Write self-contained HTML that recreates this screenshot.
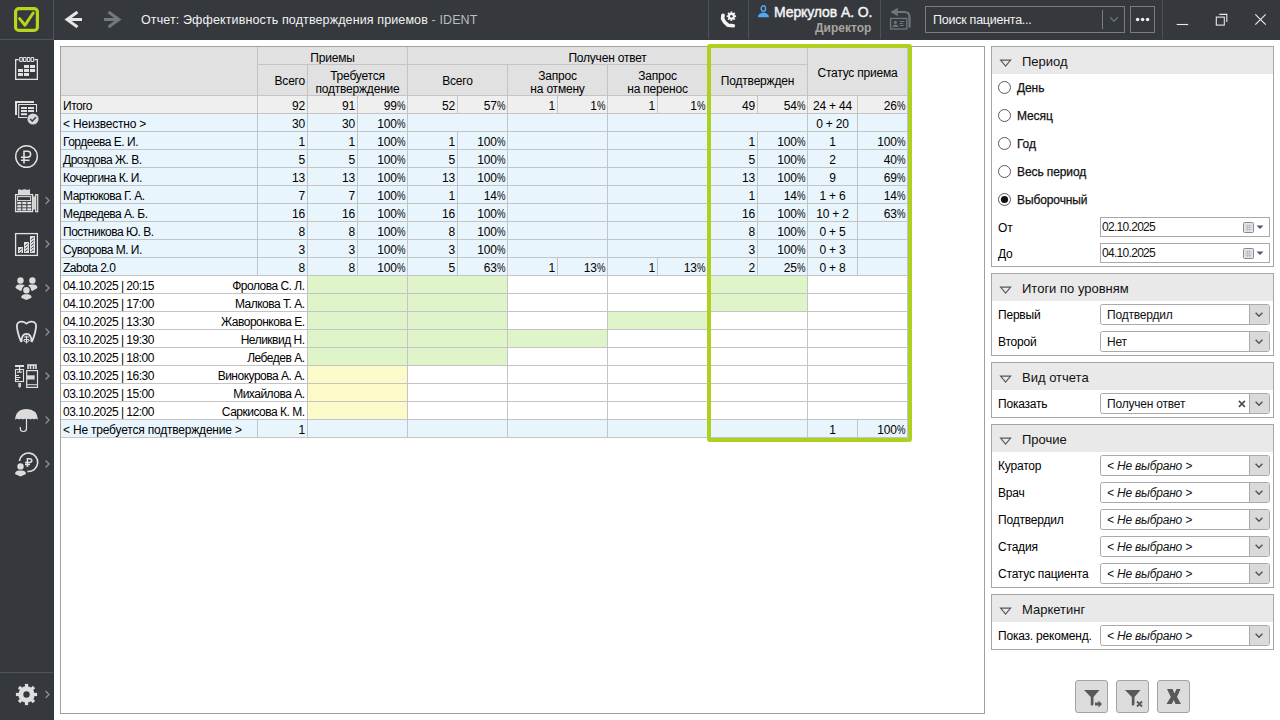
<!DOCTYPE html>
<html><head><meta charset="utf-8"><title>IDENT</title>
<style>
*{box-sizing:border-box;margin:0;padding:0}
html,body{width:1280px;height:720px;overflow:hidden;background:#fff;font-family:"Liberation Sans",sans-serif;color:#000}
.a{position:absolute}
.t{position:absolute;white-space:nowrap;font-size:12px;line-height:18px}
.c{position:absolute;white-space:nowrap;font-size:12px;line-height:17px;overflow:hidden;letter-spacing:-0.2px}
.r{text-align:right;padding-right:2px}
.l{text-align:left;padding-left:2px;letter-spacing:-0.5px}
.m{text-align:center}
</style></head><body>
<div class="a" style="left:0;top:0;width:1280px;height:40px;background:#35383d"></div><div class="a" style="left:0;top:0;width:54px;height:720px;background:#35383d"></div><div class="a" style="left:53px;top:0;width:1px;height:40px;background:#4f535a"></div><div class="a" style="left:0;top:39px;width:54px;height:1px;background:#4f535a"></div><svg class="a" style="left:0;top:0" width="54" height="40" viewBox="0 0 54 40"><rect x="15.6" y="8.6" width="21.8" height="21.8" rx="3.2" fill="none" stroke="#b4d719" stroke-width="3.2"/><path d="M19.6 18.6 L25 25.2 L33.2 13" fill="none" stroke="#b4d719" stroke-width="3" stroke-linecap="round" stroke-linejoin="round"/></svg><svg class="a" style="left:60px;top:5px" width="70" height="30" viewBox="0 0 70 30"><path d="M17.5 7 L7 14.5 L17.5 22 M7.2 14.5 H22" fill="none" stroke="#e6e6e6" stroke-width="2.9" stroke-linejoin="miter"/><path d="M48.5 7 L59 14.5 L48.5 22 M58.8 14.5 H44" fill="none" stroke="#74787f" stroke-width="2.9" stroke-linejoin="miter"/></svg><div class="t" style="left:141px;top:10px;font-size:12.5px;line-height:20px;color:#f2f2f2;letter-spacing:0.12px">Отчет: Эффективность подтверждения приемов <span style="color:#b9bcc0">- IDENT</span></div><div class="a" style="left:708px;top:0;width:1px;height:39px;background:#4d5158"></div><div class="a" style="left:748px;top:0;width:1px;height:39px;background:#4d5158"></div><div class="a" style="left:880px;top:0;width:1px;height:39px;background:#4d5158"></div><div class="a" style="left:1162px;top:0;width:1px;height:39px;background:#4d5158"></div><svg class="a" style="left:712px;top:5px" width="32" height="30" viewBox="0 0 32 30"><path d="M11 10.2 L10.6 13.6 Q12 17.5 16 20.3 L21.3 20.8" fill="none" stroke="#f4f4f4" stroke-width="3.6" stroke-linecap="round" stroke-linejoin="round"/><g transform="translate(19.4 11.2)" fill="#f4f4f4"><circle r="3.4"/><rect x="-0.9" y="-4.7" width="1.8" height="2" transform="rotate(0)"/><rect x="-0.9" y="-4.7" width="1.8" height="2" transform="rotate(45)"/><rect x="-0.9" y="-4.7" width="1.8" height="2" transform="rotate(90)"/><rect x="-0.9" y="-4.7" width="1.8" height="2" transform="rotate(135)"/><rect x="-0.9" y="-4.7" width="1.8" height="2" transform="rotate(180)"/><rect x="-0.9" y="-4.7" width="1.8" height="2" transform="rotate(225)"/><rect x="-0.9" y="-4.7" width="1.8" height="2" transform="rotate(270)"/><rect x="-0.9" y="-4.7" width="1.8" height="2" transform="rotate(315)"/></g><circle cx="19.4" cy="11.2" r="1.3" fill="#35383d"/></svg><svg class="a" style="left:752px;top:2px" width="20" height="18" viewBox="0 0 20 18"><ellipse cx="11.4" cy="6.6" rx="2.2" ry="2.8" fill="none" stroke="#4fabee" stroke-width="1.4"/><path d="M5.8 15.3 Q6.2 11.2 11.4 10.6 Q16.6 11.2 17 15.3 Z" fill="#4fabee"/></svg><div class="t" style="left:774px;top:3px;font-size:14px;line-height:18px;font-weight:normal;-webkit-text-stroke:0.45px #f4f4f4;color:#f4f4f4;letter-spacing:-0.1px">Меркулов А. О.</div><div class="t" style="left:815px;top:20px;font-size:12px;line-height:16px;font-weight:bold;color:#aaa59f;letter-spacing:0px">Директор</div><svg class="a" style="left:884px;top:4px" width="32" height="28" viewBox="0 0 32 28"><path d="M6.5 8 L13.8 3.8 V12.2 Z" fill="#70757d"/><path d="M13 8 H20.5 Q25.5 8 25.5 13 V23.5" fill="none" stroke="#70757d" stroke-width="2.2"/><rect x="6.6" y="14.4" width="16.2" height="10.6" fill="none" stroke="#70757d" stroke-width="1.3"/><circle cx="11.4" cy="18.3" r="1.6" fill="#70757d"/><path d="M8.2 23 Q8.8 20.5 11.4 20.4 Q14 20.5 14.6 23 Z" fill="#70757d"/><path d="M15.8 17.5 H20.2 M15.8 19.5 H19 M15.8 21.5 H19.8" stroke="#70757d" stroke-width="1"/></svg><div class="a" style="left:925px;top:6px;width:200px;height:27px;border:1px solid #7c7c7c"></div><div class="a" style="left:1102px;top:10px;width:1px;height:19px;background:#7c7c7c"></div><svg class="a" style="left:1108px;top:15px" width="12" height="9" viewBox="0 0 12 9"><path d="M2.2 2.2 L6 6.2 L9.8 2.2" fill="none" stroke="#6b7078" stroke-width="1.4"/></svg><div class="t" style="left:933px;top:10px;font-size:12.5px;line-height:20px;color:#f2f2f2;letter-spacing:-0.25px">Поиск пациента...</div><div class="a" style="left:1130px;top:6px;width:25px;height:27px;border:1px solid #7c7c7c"></div><svg class="a" style="left:1130px;top:6px" width="25" height="27" viewBox="0 0 25 27"><circle cx="7.6" cy="13.4" r="1.75" fill="#f0f0f0"/><circle cx="12.6" cy="13.4" r="1.75" fill="#f0f0f0"/><circle cx="17.6" cy="13.4" r="1.75" fill="#f0f0f0"/></svg><svg class="a" style="left:1165px;top:4px" width="115" height="32" viewBox="0 0 115 32"><path d="M11.7 20.5 H23.2" stroke="#e8e8e8" stroke-width="1.1"/><rect x="51.3" y="13.1" width="8" height="8" fill="none" stroke="#e8e8e8" stroke-width="1.1"/><path d="M54.2 10.4 H61.8 V18" fill="none" stroke="#e8e8e8" stroke-width="1.1"/><path d="M90.3 10.3 L100.7 20.7 M100.7 10.3 L90.3 20.7" stroke="#e8e8e8" stroke-width="1.2"/></svg><svg class="a" style="left:0;top:0" width="54" height="720" viewBox="0 0 54 720"><rect x="15.65" y="59.65" width="21.7" height="19.7" fill="none" stroke="#e2e2e2" stroke-width="1.3"/><rect x="18.6" y="56.6" width="15.8" height="5.4" fill="#35383d"/><rect x="19.7" y="57.5" width="2.6" height="4" rx="0.6" fill="none" stroke="#e2e2e2" stroke-width="1.1"/><rect x="23.5" y="57.5" width="2.6" height="4" rx="0.6" fill="none" stroke="#e2e2e2" stroke-width="1.1"/><rect x="27.3" y="57.5" width="2.6" height="4" rx="0.6" fill="none" stroke="#e2e2e2" stroke-width="1.1"/><rect x="31.1" y="57.5" width="2.6" height="4" rx="0.6" fill="none" stroke="#e2e2e2" stroke-width="1.1"/><rect x="24" y="65" width="5" height="3" fill="#e2e2e2"/><rect x="30" y="65" width="5" height="3" fill="#e2e2e2"/><rect x="18" y="69" width="5" height="3" fill="#e2e2e2"/><rect x="24" y="69" width="5" height="3" fill="#e2e2e2"/><rect x="30" y="69" width="5" height="3" fill="#e2e2e2"/><rect x="18" y="73" width="5" height="3" fill="#e2e2e2"/><rect x="24" y="73" width="5" height="3" fill="#e2e2e2"/><path d="M16 115 V102 H34" fill="none" stroke="#e2e2e2" stroke-width="2"/><path d="M27 117.5 H18.7 V104.5 H36.5 V112" fill="none" stroke="#e2e2e2" stroke-width="1.1"/><rect x="21" y="107" width="6" height="2" fill="#e2e2e2"/><rect x="28" y="107" width="6" height="2" fill="#e2e2e2"/><rect x="21" y="110" width="6" height="2" fill="#e2e2e2"/><rect x="28" y="110" width="6" height="2" fill="#e2e2e2"/><rect x="21" y="113.2" width="6" height="2" fill="#e2e2e2"/><circle cx="33" cy="119" r="5.6" fill="#d6d6d6"/><path d="M30.2 119 L32.3 121.1 L35.9 117.3" fill="none" stroke="#35383d" stroke-width="1.4"/><circle cx="26.5" cy="156.5" r="10.8" fill="none" stroke="#e2e2e2" stroke-width="1.4"/><path d="M24 163.5 V151.2 H27.6 Q30.6 151.2 30.6 154.2 Q30.6 157.2 27.6 157.2 H21 M21 160.2 H29.5" fill="none" stroke="#e2e2e2" stroke-width="1.6"/><path d="M18 194 V190 Q19 188.8 20 189.6 Q21.5 190.5 23 189.6 Q24.5 188.8 26 189.6 Q27.5 190.5 29 189.6 Q30 188.8 30 190 V194 Z" fill="#d8d8d8"/><rect x="15.6" y="194.6" width="17" height="17" fill="none" stroke="#e2e2e2" stroke-width="1.3"/><rect x="17.6" y="196.6" width="13" height="4" fill="none" stroke="#e2e2e2" stroke-width="1"/><rect x="17.3" y="202" width="4" height="2.2" fill="#e2e2e2"/><rect x="22.3" y="202" width="4" height="2.2" fill="#e2e2e2"/><rect x="27.3" y="202" width="4" height="2.2" fill="#e2e2e2"/><rect x="17.3" y="205.2" width="4" height="2.2" fill="#e2e2e2"/><rect x="22.3" y="205.2" width="4" height="2.2" fill="#e2e2e2"/><rect x="27.3" y="205.2" width="4" height="2.2" fill="#e2e2e2"/><rect x="17.3" y="208.3" width="4" height="2.2" fill="#e2e2e2"/><rect x="22.3" y="208.3" width="4" height="2.2" fill="#e2e2e2"/><rect x="27.3" y="208.3" width="4" height="2.2" fill="#e2e2e2"/><rect x="32.6" y="196.5" width="3" height="13" fill="#d0d0d0"/><rect x="35.7" y="194.7" width="2" height="17" fill="none" stroke="#e2e2e2" stroke-width="1.2"/><rect x="15.6" y="233.6" width="21.8" height="21.8" fill="none" stroke="#e2e2e2" stroke-width="1.3"/><rect x="18" y="247" width="5" height="6" fill="#e2e2e2"/><path d="M19 250.7 L22 248.5" stroke="#35383d" stroke-width="0.9"/><path d="M19 253.7 L22 251.5" stroke="#35383d" stroke-width="0.9"/><rect x="24" y="242" width="5" height="11" fill="#e2e2e2"/><path d="M25 245.7 L28 243.5" stroke="#35383d" stroke-width="0.9"/><path d="M25 248.7 L28 246.5" stroke="#35383d" stroke-width="0.9"/><path d="M25 251.7 L28 249.5" stroke="#35383d" stroke-width="0.9"/><rect x="30" y="236" width="5" height="17" fill="#e2e2e2"/><path d="M31 239.7 L34 237.5" stroke="#35383d" stroke-width="0.9"/><path d="M31 242.7 L34 240.5" stroke="#35383d" stroke-width="0.9"/><path d="M31 245.7 L34 243.5" stroke="#35383d" stroke-width="0.9"/><path d="M31 248.7 L34 246.5" stroke="#35383d" stroke-width="0.9"/><path d="M31 251.7 L34 249.5" stroke="#35383d" stroke-width="0.9"/><circle cx="20.5" cy="280.5" r="3.2" fill="#dcdcdc"/><path d="M15.5 288 Q15.5 285 18.5 284.5 H22.5 Q25.5 285 25.5 288 L20.5 291 Z" fill="#dcdcdc"/><circle cx="32.4" cy="280.5" r="3.2" fill="#dcdcdc"/><path d="M27.4 288 Q27.4 285 30.4 284.5 H34.4 Q37.4 285 37.4 288 L32.4 291 Z" fill="#dcdcdc"/><circle cx="26.4" cy="290" r="4.6" fill="#35383d"/><path d="M19.5 299 Q19.5 293.5 26.4 293.2 Q33.3 293.5 33.3 299 L26.4 302 Z" fill="#35383d"/><circle cx="26.4" cy="290.2" r="3.2" fill="#dcdcdc"/><path d="M21.2 297.8 Q21.2 294.8 24.4 294.3 H28.4 Q31.599999999999998 294.8 31.599999999999998 297.8 L26.4 300 Z" fill="#dcdcdc"/><path d="M21.5 342 Q19.5 339 17.6 331 Q16.3 325 17.5 323.5 Q19 321.5 22 321.7 Q24.5 322 26.5 323.6 Q28.5 322 31 321.7 Q34 321.5 35.5 323.5 Q36.7 325 35.4 331 Q33.5 339 31.5 342" fill="none" stroke="#e2e2e2" stroke-width="1.8"/><path d="M21.5 342 Q21.5 333.8 26.5 333.8 Q31.5 333.8 31.5 342" fill="none" stroke="#e2e2e2" stroke-width="1.8"/><path d="M23.5 340 Q26.5 344.5 29.5 340 M24 337 H29 M24 339.5 H29 M26.5 335.5 V343.5" fill="none" stroke="#e2e2e2" stroke-width="1.1"/><rect x="15" y="365" width="9" height="2" fill="#e2e2e2"/><rect x="19" y="367" width="1.2" height="5" fill="#e2e2e2"/><rect x="17" y="371.5" width="5" height="1.2" fill="#e2e2e2"/><rect x="15.5" y="369.5" width="8" height="12" fill="none" stroke="#e2e2e2" stroke-width="1.1"/><rect x="16" y="375" width="3" height="1" fill="#e2e2e2"/><rect x="16" y="377" width="4.5" height="1" fill="#e2e2e2"/><rect x="16" y="379" width="3" height="1" fill="#e2e2e2"/><path d="M18.3 383 H21 V386.5 L19.65 388 L18.3 386.5 Z" fill="#cfcfcf"/><path d="M28 369 V365 H36 V369 M30.5 365.5 V369 M33.5 365.5 V369" fill="none" stroke="#e2e2e2" stroke-width="1.6"/><rect x="26.7" y="370.6" width="10.8" height="16.8" fill="none" stroke="#e2e2e2" stroke-width="1.2"/><rect x="27" y="375.3" width="7.7" height="4.2" fill="#d8d8d8"/><rect x="26.7" y="384.2" width="10.8" height="1" fill="#e2e2e2"/><path d="M15 419.8 Q15.8 409 26.5 409 Q37.2 409 38 419.8 Q36 418 34 419.5 Q32.3 418 30.3 419.5 Q28.4 418 26.5 419.2 Q24.6 418 22.7 419.5 Q20.7 418 19 419.5 Q17 418 15 419.8 Z" fill="#dcdcdc"/><path d="M26.5 419 V428.5 Q26.5 431.5 23.5 431.5 Q20.3 431.5 20.3 428.5 V427" fill="none" stroke="#e2e2e2" stroke-width="1.2"/><path d="M19.4 461 A9.2 9.2 0 1 1 27.4 471.4" fill="none" stroke="#e2e2e2" stroke-width="1.6"/><path d="M27.4 467 V458.7 H29.6 Q31.8 458.7 31.8 460.6 Q31.8 462.5 29.6 462.5 H25 M25 464.6 H30" fill="none" stroke="#e2e2e2" stroke-width="1.5"/><circle cx="20.5" cy="466.2" r="4.6" fill="#35383d"/><circle cx="20.5" cy="466.4" r="3.2" fill="#dcdcdc"/><path d="M15.0 474 Q15.0 471 18.5 470.5 H22.5 Q26.0 471 26.0 474 L20.5 476.5 Z" fill="#dcdcdc"/><path d="M45.6 197.1 L49 200.5 L45.6 203.9" fill="none" stroke="#8c8c8c" stroke-width="1.4"/><path d="M45.6 240.6 L49 244 L45.6 247.4" fill="none" stroke="#8c8c8c" stroke-width="1.4"/><path d="M45.6 284.6 L49 288 L45.6 291.4" fill="none" stroke="#8c8c8c" stroke-width="1.4"/><path d="M45.6 328.6 L49 332 L45.6 335.4" fill="none" stroke="#8c8c8c" stroke-width="1.4"/><path d="M45.6 372.6 L49 376 L45.6 379.4" fill="none" stroke="#8c8c8c" stroke-width="1.4"/><path d="M45.6 416.6 L49 420 L45.6 423.4" fill="none" stroke="#8c8c8c" stroke-width="1.4"/><path d="M45.6 460.6 L49 464 L45.6 467.4" fill="none" stroke="#8c8c8c" stroke-width="1.4"/><path d="M45.6 691.1 L49 694.5 L45.6 697.9" fill="none" stroke="#8c8c8c" stroke-width="1.4"/><rect x="0" y="672" width="53" height="1" fill="#50545b"/><g transform="translate(26.5 694.5)"><circle r="8.2" fill="#dedede"/><rect x="-1.6" y="-10.6" width="3.2" height="3.5" transform="rotate(0)" fill="#dedede"/><rect x="-1.6" y="-10.6" width="3.2" height="3.5" transform="rotate(45)" fill="#dedede"/><rect x="-1.6" y="-10.6" width="3.2" height="3.5" transform="rotate(90)" fill="#dedede"/><rect x="-1.6" y="-10.6" width="3.2" height="3.5" transform="rotate(135)" fill="#dedede"/><rect x="-1.6" y="-10.6" width="3.2" height="3.5" transform="rotate(180)" fill="#dedede"/><rect x="-1.6" y="-10.6" width="3.2" height="3.5" transform="rotate(225)" fill="#dedede"/><rect x="-1.6" y="-10.6" width="3.2" height="3.5" transform="rotate(270)" fill="#dedede"/><rect x="-1.6" y="-10.6" width="3.2" height="3.5" transform="rotate(315)" fill="#dedede"/><circle r="3.2" fill="#35383d"/></g></svg><div class="a" style="left:60px;top:46px;width:925px;height:668px;border:1px solid #a0a0a0;background:#fff"></div><div class="a" style="left:61px;top:47px;width:197px;height:49px;background:#e1e1e1;border-right:1px solid #c4c4c4;border-bottom:1px solid #c4c4c4"></div><div class="a" style="left:258px;top:47px;width:150px;height:18px;background:#e1e1e1;border-right:1px solid #c4c4c4;border-bottom:1px solid #c4c4c4"></div><div class="c m" style="left:258px;top:47px;width:149px;height:17px;padding-top:2px;padding-top:3px">Приемы</div><div class="a" style="left:408px;top:47px;width:400px;height:18px;background:#e1e1e1;border-right:1px solid #c4c4c4;border-bottom:1px solid #c4c4c4"></div><div class="c m" style="left:408px;top:47px;width:399px;height:17px;padding-top:2px;padding-top:3px">Получен ответ</div><div class="a" style="left:808px;top:47px;width:100px;height:49px;background:#e1e1e1;border-right:1px solid #c4c4c4;border-bottom:1px solid #c4c4c4"></div><div class="a" style="left:258px;top:65px;width:50px;height:31px;background:#e1e1e1;border-right:1px solid #c4c4c4;border-bottom:1px solid #c4c4c4"></div><div class="a" style="left:308px;top:65px;width:100px;height:31px;background:#e1e1e1;border-right:1px solid #c4c4c4;border-bottom:1px solid #c4c4c4"></div><div class="a" style="left:408px;top:65px;width:100px;height:31px;background:#e1e1e1;border-right:1px solid #c4c4c4;border-bottom:1px solid #c4c4c4"></div><div class="a" style="left:508px;top:65px;width:100px;height:31px;background:#e1e1e1;border-right:1px solid #c4c4c4;border-bottom:1px solid #c4c4c4"></div><div class="a" style="left:608px;top:65px;width:100px;height:31px;background:#e1e1e1;border-right:1px solid #c4c4c4;border-bottom:1px solid #c4c4c4"></div><div class="a" style="left:708px;top:65px;width:100px;height:31px;background:#e1e1e1;border-right:1px solid #c4c4c4;border-bottom:1px solid #c4c4c4"></div><div class="a r" style="left:258px;top:75.0px;width:49px;font-size:12px;line-height:13px;white-space:nowrap;letter-spacing:-0.2px">Всего</div><div class="a m" style="left:308px;top:69.5px;width:99px;font-size:12px;line-height:13px;white-space:nowrap;letter-spacing:-0.2px">Требуется<br>подтверждение</div><div class="a m" style="left:408px;top:75.0px;width:99px;font-size:12px;line-height:13px;white-space:nowrap;letter-spacing:-0.2px">Всего</div><div class="a m" style="left:508px;top:69.5px;width:99px;font-size:12px;line-height:13px;white-space:nowrap;letter-spacing:-0.2px">Запрос<br>на отмену</div><div class="a m" style="left:608px;top:69.5px;width:99px;font-size:12px;line-height:13px;white-space:nowrap;letter-spacing:-0.2px">Запрос<br>на перенос</div><div class="a m" style="left:708px;top:75.0px;width:99px;font-size:12px;line-height:13px;white-space:nowrap;letter-spacing:-0.2px">Подтвержден</div><div class="a m" style="left:808px;top:66.5px;width:99px;font-size:12px;line-height:13px;white-space:nowrap;letter-spacing:-0.2px">Статус приема</div><div class="a" style="left:61px;top:96px;width:197px;height:18px;background:#efefef;border-right:1px solid #c4c4c4;border-bottom:1px solid #c4c4c4"></div><div class="c l" style="left:61px;top:96px;width:196px;height:17px;padding-top:2px;">Итого</div><div class="a" style="left:258px;top:96px;width:50px;height:18px;background:#efefef;border-right:1px solid #c4c4c4;border-bottom:1px solid #c4c4c4"></div><div class="c r" style="left:258px;top:96px;width:49px;height:17px;padding-top:2px;">92</div><div class="a" style="left:308px;top:96px;width:50px;height:18px;background:#efefef;border-right:1px solid #c4c4c4;border-bottom:1px solid #c4c4c4"></div><div class="c r" style="left:308px;top:96px;width:49px;height:17px;padding-top:2px;">91</div><div class="a" style="left:358px;top:96px;width:50px;height:18px;background:#efefef;border-right:1px solid #c4c4c4;border-bottom:1px solid #c4c4c4"></div><div class="c r" style="left:358px;top:96px;width:49px;height:17px;padding-top:2px;">99<span style="display:inline-block;transform:scaleX(0.8);transform-origin:100% 50%;margin-left:-2.1px">%</span></div><div class="a" style="left:408px;top:96px;width:50px;height:18px;background:#efefef;border-right:1px solid #c4c4c4;border-bottom:1px solid #c4c4c4"></div><div class="c r" style="left:408px;top:96px;width:49px;height:17px;padding-top:2px;">52</div><div class="a" style="left:458px;top:96px;width:50px;height:18px;background:#efefef;border-right:1px solid #c4c4c4;border-bottom:1px solid #c4c4c4"></div><div class="c r" style="left:458px;top:96px;width:49px;height:17px;padding-top:2px;">57<span style="display:inline-block;transform:scaleX(0.8);transform-origin:100% 50%;margin-left:-2.1px">%</span></div><div class="a" style="left:508px;top:96px;width:50px;height:18px;background:#efefef;border-right:1px solid #c4c4c4;border-bottom:1px solid #c4c4c4"></div><div class="c r" style="left:508px;top:96px;width:49px;height:17px;padding-top:2px;">1</div><div class="a" style="left:558px;top:96px;width:50px;height:18px;background:#efefef;border-right:1px solid #c4c4c4;border-bottom:1px solid #c4c4c4"></div><div class="c r" style="left:558px;top:96px;width:49px;height:17px;padding-top:2px;">1<span style="display:inline-block;transform:scaleX(0.8);transform-origin:100% 50%;margin-left:-2.1px">%</span></div><div class="a" style="left:608px;top:96px;width:50px;height:18px;background:#efefef;border-right:1px solid #c4c4c4;border-bottom:1px solid #c4c4c4"></div><div class="c r" style="left:608px;top:96px;width:49px;height:17px;padding-top:2px;">1</div><div class="a" style="left:658px;top:96px;width:50px;height:18px;background:#efefef;border-right:1px solid #c4c4c4;border-bottom:1px solid #c4c4c4"></div><div class="c r" style="left:658px;top:96px;width:49px;height:17px;padding-top:2px;">1<span style="display:inline-block;transform:scaleX(0.8);transform-origin:100% 50%;margin-left:-2.1px">%</span></div><div class="a" style="left:708px;top:96px;width:50px;height:18px;background:#efefef;border-right:1px solid #c4c4c4;border-bottom:1px solid #c4c4c4"></div><div class="c r" style="left:708px;top:96px;width:49px;height:17px;padding-top:2px;">49</div><div class="a" style="left:758px;top:96px;width:50px;height:18px;background:#efefef;border-right:1px solid #c4c4c4;border-bottom:1px solid #c4c4c4"></div><div class="c r" style="left:758px;top:96px;width:49px;height:17px;padding-top:2px;">54<span style="display:inline-block;transform:scaleX(0.8);transform-origin:100% 50%;margin-left:-2.1px">%</span></div><div class="a" style="left:808px;top:96px;width:50px;height:18px;background:#efefef;border-right:1px solid #c4c4c4;border-bottom:1px solid #c4c4c4"></div><div class="c m" style="left:808px;top:96px;width:49px;height:17px;padding-top:2px;">24 + 44</div><div class="a" style="left:858px;top:96px;width:50px;height:18px;background:#efefef;border-right:1px solid #c4c4c4;border-bottom:1px solid #c4c4c4"></div><div class="c r" style="left:858px;top:96px;width:49px;height:17px;padding-top:2px;">26<span style="display:inline-block;transform:scaleX(0.8);transform-origin:100% 50%;margin-left:-2.1px">%</span></div><div class="a" style="left:61px;top:114px;width:197px;height:18px;background:#e8f5fd;border-right:1px solid #c4c4c4;border-bottom:1px solid #c4c4c4"></div><div class="c l" style="left:61px;top:114px;width:196px;height:17px;padding-top:2px;letter-spacing:-0.2px">&lt; Неизвестно &gt;</div><div class="a" style="left:258px;top:114px;width:50px;height:18px;background:#e8f5fd;border-right:1px solid #c4c4c4;border-bottom:1px solid #c4c4c4"></div><div class="c r" style="left:258px;top:114px;width:49px;height:17px;padding-top:2px;">30</div><div class="a" style="left:308px;top:114px;width:50px;height:18px;background:#e8f5fd;border-right:1px solid #c4c4c4;border-bottom:1px solid #c4c4c4"></div><div class="c r" style="left:308px;top:114px;width:49px;height:17px;padding-top:2px;">30</div><div class="a" style="left:358px;top:114px;width:50px;height:18px;background:#e8f5fd;border-right:1px solid #c4c4c4;border-bottom:1px solid #c4c4c4"></div><div class="c r" style="left:358px;top:114px;width:49px;height:17px;padding-top:2px;">100<span style="display:inline-block;transform:scaleX(0.8);transform-origin:100% 50%;margin-left:-2.1px">%</span></div><div class="a" style="left:408px;top:114px;width:100px;height:18px;background:#e8f5fd;border-right:1px solid #c4c4c4;border-bottom:1px solid #c4c4c4"></div><div class="a" style="left:508px;top:114px;width:100px;height:18px;background:#e8f5fd;border-right:1px solid #c4c4c4;border-bottom:1px solid #c4c4c4"></div><div class="a" style="left:608px;top:114px;width:100px;height:18px;background:#e8f5fd;border-right:1px solid #c4c4c4;border-bottom:1px solid #c4c4c4"></div><div class="a" style="left:708px;top:114px;width:100px;height:18px;background:#e8f5fd;border-right:1px solid #c4c4c4;border-bottom:1px solid #c4c4c4"></div><div class="a" style="left:808px;top:114px;width:50px;height:18px;background:#e8f5fd;border-right:1px solid #c4c4c4;border-bottom:1px solid #c4c4c4"></div><div class="c m" style="left:808px;top:114px;width:49px;height:17px;padding-top:2px;">0 + 20</div><div class="a" style="left:858px;top:114px;width:50px;height:18px;background:#e8f5fd;border-right:1px solid #c4c4c4;border-bottom:1px solid #c4c4c4"></div><div class="a" style="left:61px;top:132px;width:197px;height:18px;background:#e8f5fd;border-right:1px solid #c4c4c4;border-bottom:1px solid #c4c4c4"></div><div class="c l" style="left:61px;top:132px;width:196px;height:17px;padding-top:2px;">Гордеева Е. И.</div><div class="a" style="left:258px;top:132px;width:50px;height:18px;background:#e8f5fd;border-right:1px solid #c4c4c4;border-bottom:1px solid #c4c4c4"></div><div class="c r" style="left:258px;top:132px;width:49px;height:17px;padding-top:2px;">1</div><div class="a" style="left:308px;top:132px;width:50px;height:18px;background:#e8f5fd;border-right:1px solid #c4c4c4;border-bottom:1px solid #c4c4c4"></div><div class="c r" style="left:308px;top:132px;width:49px;height:17px;padding-top:2px;">1</div><div class="a" style="left:358px;top:132px;width:50px;height:18px;background:#e8f5fd;border-right:1px solid #c4c4c4;border-bottom:1px solid #c4c4c4"></div><div class="c r" style="left:358px;top:132px;width:49px;height:17px;padding-top:2px;">100<span style="display:inline-block;transform:scaleX(0.8);transform-origin:100% 50%;margin-left:-2.1px">%</span></div><div class="a" style="left:408px;top:132px;width:50px;height:18px;background:#e8f5fd;border-right:1px solid #c4c4c4;border-bottom:1px solid #c4c4c4"></div><div class="c r" style="left:408px;top:132px;width:49px;height:17px;padding-top:2px;">1</div><div class="a" style="left:458px;top:132px;width:50px;height:18px;background:#e8f5fd;border-right:1px solid #c4c4c4;border-bottom:1px solid #c4c4c4"></div><div class="c r" style="left:458px;top:132px;width:49px;height:17px;padding-top:2px;">100<span style="display:inline-block;transform:scaleX(0.8);transform-origin:100% 50%;margin-left:-2.1px">%</span></div><div class="a" style="left:508px;top:132px;width:100px;height:18px;background:#e8f5fd;border-right:1px solid #c4c4c4;border-bottom:1px solid #c4c4c4"></div><div class="a" style="left:608px;top:132px;width:100px;height:18px;background:#e8f5fd;border-right:1px solid #c4c4c4;border-bottom:1px solid #c4c4c4"></div><div class="a" style="left:708px;top:132px;width:50px;height:18px;background:#e8f5fd;border-right:1px solid #c4c4c4;border-bottom:1px solid #c4c4c4"></div><div class="c r" style="left:708px;top:132px;width:49px;height:17px;padding-top:2px;">1</div><div class="a" style="left:758px;top:132px;width:50px;height:18px;background:#e8f5fd;border-right:1px solid #c4c4c4;border-bottom:1px solid #c4c4c4"></div><div class="c r" style="left:758px;top:132px;width:49px;height:17px;padding-top:2px;">100<span style="display:inline-block;transform:scaleX(0.8);transform-origin:100% 50%;margin-left:-2.1px">%</span></div><div class="a" style="left:808px;top:132px;width:50px;height:18px;background:#e8f5fd;border-right:1px solid #c4c4c4;border-bottom:1px solid #c4c4c4"></div><div class="c m" style="left:808px;top:132px;width:49px;height:17px;padding-top:2px;">1</div><div class="a" style="left:858px;top:132px;width:50px;height:18px;background:#e8f5fd;border-right:1px solid #c4c4c4;border-bottom:1px solid #c4c4c4"></div><div class="c r" style="left:858px;top:132px;width:49px;height:17px;padding-top:2px;">100<span style="display:inline-block;transform:scaleX(0.8);transform-origin:100% 50%;margin-left:-2.1px">%</span></div><div class="a" style="left:61px;top:150px;width:197px;height:18px;background:#e8f5fd;border-right:1px solid #c4c4c4;border-bottom:1px solid #c4c4c4"></div><div class="c l" style="left:61px;top:150px;width:196px;height:17px;padding-top:2px;">Дроздова Ж. В.</div><div class="a" style="left:258px;top:150px;width:50px;height:18px;background:#e8f5fd;border-right:1px solid #c4c4c4;border-bottom:1px solid #c4c4c4"></div><div class="c r" style="left:258px;top:150px;width:49px;height:17px;padding-top:2px;">5</div><div class="a" style="left:308px;top:150px;width:50px;height:18px;background:#e8f5fd;border-right:1px solid #c4c4c4;border-bottom:1px solid #c4c4c4"></div><div class="c r" style="left:308px;top:150px;width:49px;height:17px;padding-top:2px;">5</div><div class="a" style="left:358px;top:150px;width:50px;height:18px;background:#e8f5fd;border-right:1px solid #c4c4c4;border-bottom:1px solid #c4c4c4"></div><div class="c r" style="left:358px;top:150px;width:49px;height:17px;padding-top:2px;">100<span style="display:inline-block;transform:scaleX(0.8);transform-origin:100% 50%;margin-left:-2.1px">%</span></div><div class="a" style="left:408px;top:150px;width:50px;height:18px;background:#e8f5fd;border-right:1px solid #c4c4c4;border-bottom:1px solid #c4c4c4"></div><div class="c r" style="left:408px;top:150px;width:49px;height:17px;padding-top:2px;">5</div><div class="a" style="left:458px;top:150px;width:50px;height:18px;background:#e8f5fd;border-right:1px solid #c4c4c4;border-bottom:1px solid #c4c4c4"></div><div class="c r" style="left:458px;top:150px;width:49px;height:17px;padding-top:2px;">100<span style="display:inline-block;transform:scaleX(0.8);transform-origin:100% 50%;margin-left:-2.1px">%</span></div><div class="a" style="left:508px;top:150px;width:100px;height:18px;background:#e8f5fd;border-right:1px solid #c4c4c4;border-bottom:1px solid #c4c4c4"></div><div class="a" style="left:608px;top:150px;width:100px;height:18px;background:#e8f5fd;border-right:1px solid #c4c4c4;border-bottom:1px solid #c4c4c4"></div><div class="a" style="left:708px;top:150px;width:50px;height:18px;background:#e8f5fd;border-right:1px solid #c4c4c4;border-bottom:1px solid #c4c4c4"></div><div class="c r" style="left:708px;top:150px;width:49px;height:17px;padding-top:2px;">5</div><div class="a" style="left:758px;top:150px;width:50px;height:18px;background:#e8f5fd;border-right:1px solid #c4c4c4;border-bottom:1px solid #c4c4c4"></div><div class="c r" style="left:758px;top:150px;width:49px;height:17px;padding-top:2px;">100<span style="display:inline-block;transform:scaleX(0.8);transform-origin:100% 50%;margin-left:-2.1px">%</span></div><div class="a" style="left:808px;top:150px;width:50px;height:18px;background:#e8f5fd;border-right:1px solid #c4c4c4;border-bottom:1px solid #c4c4c4"></div><div class="c m" style="left:808px;top:150px;width:49px;height:17px;padding-top:2px;">2</div><div class="a" style="left:858px;top:150px;width:50px;height:18px;background:#e8f5fd;border-right:1px solid #c4c4c4;border-bottom:1px solid #c4c4c4"></div><div class="c r" style="left:858px;top:150px;width:49px;height:17px;padding-top:2px;">40<span style="display:inline-block;transform:scaleX(0.8);transform-origin:100% 50%;margin-left:-2.1px">%</span></div><div class="a" style="left:61px;top:168px;width:197px;height:18px;background:#e8f5fd;border-right:1px solid #c4c4c4;border-bottom:1px solid #c4c4c4"></div><div class="c l" style="left:61px;top:168px;width:196px;height:17px;padding-top:2px;">Кочергина К. И.</div><div class="a" style="left:258px;top:168px;width:50px;height:18px;background:#e8f5fd;border-right:1px solid #c4c4c4;border-bottom:1px solid #c4c4c4"></div><div class="c r" style="left:258px;top:168px;width:49px;height:17px;padding-top:2px;">13</div><div class="a" style="left:308px;top:168px;width:50px;height:18px;background:#e8f5fd;border-right:1px solid #c4c4c4;border-bottom:1px solid #c4c4c4"></div><div class="c r" style="left:308px;top:168px;width:49px;height:17px;padding-top:2px;">13</div><div class="a" style="left:358px;top:168px;width:50px;height:18px;background:#e8f5fd;border-right:1px solid #c4c4c4;border-bottom:1px solid #c4c4c4"></div><div class="c r" style="left:358px;top:168px;width:49px;height:17px;padding-top:2px;">100<span style="display:inline-block;transform:scaleX(0.8);transform-origin:100% 50%;margin-left:-2.1px">%</span></div><div class="a" style="left:408px;top:168px;width:50px;height:18px;background:#e8f5fd;border-right:1px solid #c4c4c4;border-bottom:1px solid #c4c4c4"></div><div class="c r" style="left:408px;top:168px;width:49px;height:17px;padding-top:2px;">13</div><div class="a" style="left:458px;top:168px;width:50px;height:18px;background:#e8f5fd;border-right:1px solid #c4c4c4;border-bottom:1px solid #c4c4c4"></div><div class="c r" style="left:458px;top:168px;width:49px;height:17px;padding-top:2px;">100<span style="display:inline-block;transform:scaleX(0.8);transform-origin:100% 50%;margin-left:-2.1px">%</span></div><div class="a" style="left:508px;top:168px;width:100px;height:18px;background:#e8f5fd;border-right:1px solid #c4c4c4;border-bottom:1px solid #c4c4c4"></div><div class="a" style="left:608px;top:168px;width:100px;height:18px;background:#e8f5fd;border-right:1px solid #c4c4c4;border-bottom:1px solid #c4c4c4"></div><div class="a" style="left:708px;top:168px;width:50px;height:18px;background:#e8f5fd;border-right:1px solid #c4c4c4;border-bottom:1px solid #c4c4c4"></div><div class="c r" style="left:708px;top:168px;width:49px;height:17px;padding-top:2px;">13</div><div class="a" style="left:758px;top:168px;width:50px;height:18px;background:#e8f5fd;border-right:1px solid #c4c4c4;border-bottom:1px solid #c4c4c4"></div><div class="c r" style="left:758px;top:168px;width:49px;height:17px;padding-top:2px;">100<span style="display:inline-block;transform:scaleX(0.8);transform-origin:100% 50%;margin-left:-2.1px">%</span></div><div class="a" style="left:808px;top:168px;width:50px;height:18px;background:#e8f5fd;border-right:1px solid #c4c4c4;border-bottom:1px solid #c4c4c4"></div><div class="c m" style="left:808px;top:168px;width:49px;height:17px;padding-top:2px;">9</div><div class="a" style="left:858px;top:168px;width:50px;height:18px;background:#e8f5fd;border-right:1px solid #c4c4c4;border-bottom:1px solid #c4c4c4"></div><div class="c r" style="left:858px;top:168px;width:49px;height:17px;padding-top:2px;">69<span style="display:inline-block;transform:scaleX(0.8);transform-origin:100% 50%;margin-left:-2.1px">%</span></div><div class="a" style="left:61px;top:186px;width:197px;height:18px;background:#e8f5fd;border-right:1px solid #c4c4c4;border-bottom:1px solid #c4c4c4"></div><div class="c l" style="left:61px;top:186px;width:196px;height:17px;padding-top:2px;">Мартюкова Г. А.</div><div class="a" style="left:258px;top:186px;width:50px;height:18px;background:#e8f5fd;border-right:1px solid #c4c4c4;border-bottom:1px solid #c4c4c4"></div><div class="c r" style="left:258px;top:186px;width:49px;height:17px;padding-top:2px;">7</div><div class="a" style="left:308px;top:186px;width:50px;height:18px;background:#e8f5fd;border-right:1px solid #c4c4c4;border-bottom:1px solid #c4c4c4"></div><div class="c r" style="left:308px;top:186px;width:49px;height:17px;padding-top:2px;">7</div><div class="a" style="left:358px;top:186px;width:50px;height:18px;background:#e8f5fd;border-right:1px solid #c4c4c4;border-bottom:1px solid #c4c4c4"></div><div class="c r" style="left:358px;top:186px;width:49px;height:17px;padding-top:2px;">100<span style="display:inline-block;transform:scaleX(0.8);transform-origin:100% 50%;margin-left:-2.1px">%</span></div><div class="a" style="left:408px;top:186px;width:50px;height:18px;background:#e8f5fd;border-right:1px solid #c4c4c4;border-bottom:1px solid #c4c4c4"></div><div class="c r" style="left:408px;top:186px;width:49px;height:17px;padding-top:2px;">1</div><div class="a" style="left:458px;top:186px;width:50px;height:18px;background:#e8f5fd;border-right:1px solid #c4c4c4;border-bottom:1px solid #c4c4c4"></div><div class="c r" style="left:458px;top:186px;width:49px;height:17px;padding-top:2px;">14<span style="display:inline-block;transform:scaleX(0.8);transform-origin:100% 50%;margin-left:-2.1px">%</span></div><div class="a" style="left:508px;top:186px;width:100px;height:18px;background:#e8f5fd;border-right:1px solid #c4c4c4;border-bottom:1px solid #c4c4c4"></div><div class="a" style="left:608px;top:186px;width:100px;height:18px;background:#e8f5fd;border-right:1px solid #c4c4c4;border-bottom:1px solid #c4c4c4"></div><div class="a" style="left:708px;top:186px;width:50px;height:18px;background:#e8f5fd;border-right:1px solid #c4c4c4;border-bottom:1px solid #c4c4c4"></div><div class="c r" style="left:708px;top:186px;width:49px;height:17px;padding-top:2px;">1</div><div class="a" style="left:758px;top:186px;width:50px;height:18px;background:#e8f5fd;border-right:1px solid #c4c4c4;border-bottom:1px solid #c4c4c4"></div><div class="c r" style="left:758px;top:186px;width:49px;height:17px;padding-top:2px;">14<span style="display:inline-block;transform:scaleX(0.8);transform-origin:100% 50%;margin-left:-2.1px">%</span></div><div class="a" style="left:808px;top:186px;width:50px;height:18px;background:#e8f5fd;border-right:1px solid #c4c4c4;border-bottom:1px solid #c4c4c4"></div><div class="c m" style="left:808px;top:186px;width:49px;height:17px;padding-top:2px;">1 + 6</div><div class="a" style="left:858px;top:186px;width:50px;height:18px;background:#e8f5fd;border-right:1px solid #c4c4c4;border-bottom:1px solid #c4c4c4"></div><div class="c r" style="left:858px;top:186px;width:49px;height:17px;padding-top:2px;">14<span style="display:inline-block;transform:scaleX(0.8);transform-origin:100% 50%;margin-left:-2.1px">%</span></div><div class="a" style="left:61px;top:204px;width:197px;height:18px;background:#e8f5fd;border-right:1px solid #c4c4c4;border-bottom:1px solid #c4c4c4"></div><div class="c l" style="left:61px;top:204px;width:196px;height:17px;padding-top:2px;">Медведева А. Б.</div><div class="a" style="left:258px;top:204px;width:50px;height:18px;background:#e8f5fd;border-right:1px solid #c4c4c4;border-bottom:1px solid #c4c4c4"></div><div class="c r" style="left:258px;top:204px;width:49px;height:17px;padding-top:2px;">16</div><div class="a" style="left:308px;top:204px;width:50px;height:18px;background:#e8f5fd;border-right:1px solid #c4c4c4;border-bottom:1px solid #c4c4c4"></div><div class="c r" style="left:308px;top:204px;width:49px;height:17px;padding-top:2px;">16</div><div class="a" style="left:358px;top:204px;width:50px;height:18px;background:#e8f5fd;border-right:1px solid #c4c4c4;border-bottom:1px solid #c4c4c4"></div><div class="c r" style="left:358px;top:204px;width:49px;height:17px;padding-top:2px;">100<span style="display:inline-block;transform:scaleX(0.8);transform-origin:100% 50%;margin-left:-2.1px">%</span></div><div class="a" style="left:408px;top:204px;width:50px;height:18px;background:#e8f5fd;border-right:1px solid #c4c4c4;border-bottom:1px solid #c4c4c4"></div><div class="c r" style="left:408px;top:204px;width:49px;height:17px;padding-top:2px;">16</div><div class="a" style="left:458px;top:204px;width:50px;height:18px;background:#e8f5fd;border-right:1px solid #c4c4c4;border-bottom:1px solid #c4c4c4"></div><div class="c r" style="left:458px;top:204px;width:49px;height:17px;padding-top:2px;">100<span style="display:inline-block;transform:scaleX(0.8);transform-origin:100% 50%;margin-left:-2.1px">%</span></div><div class="a" style="left:508px;top:204px;width:100px;height:18px;background:#e8f5fd;border-right:1px solid #c4c4c4;border-bottom:1px solid #c4c4c4"></div><div class="a" style="left:608px;top:204px;width:100px;height:18px;background:#e8f5fd;border-right:1px solid #c4c4c4;border-bottom:1px solid #c4c4c4"></div><div class="a" style="left:708px;top:204px;width:50px;height:18px;background:#e8f5fd;border-right:1px solid #c4c4c4;border-bottom:1px solid #c4c4c4"></div><div class="c r" style="left:708px;top:204px;width:49px;height:17px;padding-top:2px;">16</div><div class="a" style="left:758px;top:204px;width:50px;height:18px;background:#e8f5fd;border-right:1px solid #c4c4c4;border-bottom:1px solid #c4c4c4"></div><div class="c r" style="left:758px;top:204px;width:49px;height:17px;padding-top:2px;">100<span style="display:inline-block;transform:scaleX(0.8);transform-origin:100% 50%;margin-left:-2.1px">%</span></div><div class="a" style="left:808px;top:204px;width:50px;height:18px;background:#e8f5fd;border-right:1px solid #c4c4c4;border-bottom:1px solid #c4c4c4"></div><div class="c m" style="left:808px;top:204px;width:49px;height:17px;padding-top:2px;">10 + 2</div><div class="a" style="left:858px;top:204px;width:50px;height:18px;background:#e8f5fd;border-right:1px solid #c4c4c4;border-bottom:1px solid #c4c4c4"></div><div class="c r" style="left:858px;top:204px;width:49px;height:17px;padding-top:2px;">63<span style="display:inline-block;transform:scaleX(0.8);transform-origin:100% 50%;margin-left:-2.1px">%</span></div><div class="a" style="left:61px;top:222px;width:197px;height:18px;background:#e8f5fd;border-right:1px solid #c4c4c4;border-bottom:1px solid #c4c4c4"></div><div class="c l" style="left:61px;top:222px;width:196px;height:17px;padding-top:2px;">Постникова Ю. В.</div><div class="a" style="left:258px;top:222px;width:50px;height:18px;background:#e8f5fd;border-right:1px solid #c4c4c4;border-bottom:1px solid #c4c4c4"></div><div class="c r" style="left:258px;top:222px;width:49px;height:17px;padding-top:2px;">8</div><div class="a" style="left:308px;top:222px;width:50px;height:18px;background:#e8f5fd;border-right:1px solid #c4c4c4;border-bottom:1px solid #c4c4c4"></div><div class="c r" style="left:308px;top:222px;width:49px;height:17px;padding-top:2px;">8</div><div class="a" style="left:358px;top:222px;width:50px;height:18px;background:#e8f5fd;border-right:1px solid #c4c4c4;border-bottom:1px solid #c4c4c4"></div><div class="c r" style="left:358px;top:222px;width:49px;height:17px;padding-top:2px;">100<span style="display:inline-block;transform:scaleX(0.8);transform-origin:100% 50%;margin-left:-2.1px">%</span></div><div class="a" style="left:408px;top:222px;width:50px;height:18px;background:#e8f5fd;border-right:1px solid #c4c4c4;border-bottom:1px solid #c4c4c4"></div><div class="c r" style="left:408px;top:222px;width:49px;height:17px;padding-top:2px;">8</div><div class="a" style="left:458px;top:222px;width:50px;height:18px;background:#e8f5fd;border-right:1px solid #c4c4c4;border-bottom:1px solid #c4c4c4"></div><div class="c r" style="left:458px;top:222px;width:49px;height:17px;padding-top:2px;">100<span style="display:inline-block;transform:scaleX(0.8);transform-origin:100% 50%;margin-left:-2.1px">%</span></div><div class="a" style="left:508px;top:222px;width:100px;height:18px;background:#e8f5fd;border-right:1px solid #c4c4c4;border-bottom:1px solid #c4c4c4"></div><div class="a" style="left:608px;top:222px;width:100px;height:18px;background:#e8f5fd;border-right:1px solid #c4c4c4;border-bottom:1px solid #c4c4c4"></div><div class="a" style="left:708px;top:222px;width:50px;height:18px;background:#e8f5fd;border-right:1px solid #c4c4c4;border-bottom:1px solid #c4c4c4"></div><div class="c r" style="left:708px;top:222px;width:49px;height:17px;padding-top:2px;">8</div><div class="a" style="left:758px;top:222px;width:50px;height:18px;background:#e8f5fd;border-right:1px solid #c4c4c4;border-bottom:1px solid #c4c4c4"></div><div class="c r" style="left:758px;top:222px;width:49px;height:17px;padding-top:2px;">100<span style="display:inline-block;transform:scaleX(0.8);transform-origin:100% 50%;margin-left:-2.1px">%</span></div><div class="a" style="left:808px;top:222px;width:50px;height:18px;background:#e8f5fd;border-right:1px solid #c4c4c4;border-bottom:1px solid #c4c4c4"></div><div class="c m" style="left:808px;top:222px;width:49px;height:17px;padding-top:2px;">0 + 5</div><div class="a" style="left:858px;top:222px;width:50px;height:18px;background:#e8f5fd;border-right:1px solid #c4c4c4;border-bottom:1px solid #c4c4c4"></div><div class="a" style="left:61px;top:240px;width:197px;height:18px;background:#e8f5fd;border-right:1px solid #c4c4c4;border-bottom:1px solid #c4c4c4"></div><div class="c l" style="left:61px;top:240px;width:196px;height:17px;padding-top:2px;">Суворова М. И.</div><div class="a" style="left:258px;top:240px;width:50px;height:18px;background:#e8f5fd;border-right:1px solid #c4c4c4;border-bottom:1px solid #c4c4c4"></div><div class="c r" style="left:258px;top:240px;width:49px;height:17px;padding-top:2px;">3</div><div class="a" style="left:308px;top:240px;width:50px;height:18px;background:#e8f5fd;border-right:1px solid #c4c4c4;border-bottom:1px solid #c4c4c4"></div><div class="c r" style="left:308px;top:240px;width:49px;height:17px;padding-top:2px;">3</div><div class="a" style="left:358px;top:240px;width:50px;height:18px;background:#e8f5fd;border-right:1px solid #c4c4c4;border-bottom:1px solid #c4c4c4"></div><div class="c r" style="left:358px;top:240px;width:49px;height:17px;padding-top:2px;">100<span style="display:inline-block;transform:scaleX(0.8);transform-origin:100% 50%;margin-left:-2.1px">%</span></div><div class="a" style="left:408px;top:240px;width:50px;height:18px;background:#e8f5fd;border-right:1px solid #c4c4c4;border-bottom:1px solid #c4c4c4"></div><div class="c r" style="left:408px;top:240px;width:49px;height:17px;padding-top:2px;">3</div><div class="a" style="left:458px;top:240px;width:50px;height:18px;background:#e8f5fd;border-right:1px solid #c4c4c4;border-bottom:1px solid #c4c4c4"></div><div class="c r" style="left:458px;top:240px;width:49px;height:17px;padding-top:2px;">100<span style="display:inline-block;transform:scaleX(0.8);transform-origin:100% 50%;margin-left:-2.1px">%</span></div><div class="a" style="left:508px;top:240px;width:100px;height:18px;background:#e8f5fd;border-right:1px solid #c4c4c4;border-bottom:1px solid #c4c4c4"></div><div class="a" style="left:608px;top:240px;width:100px;height:18px;background:#e8f5fd;border-right:1px solid #c4c4c4;border-bottom:1px solid #c4c4c4"></div><div class="a" style="left:708px;top:240px;width:50px;height:18px;background:#e8f5fd;border-right:1px solid #c4c4c4;border-bottom:1px solid #c4c4c4"></div><div class="c r" style="left:708px;top:240px;width:49px;height:17px;padding-top:2px;">3</div><div class="a" style="left:758px;top:240px;width:50px;height:18px;background:#e8f5fd;border-right:1px solid #c4c4c4;border-bottom:1px solid #c4c4c4"></div><div class="c r" style="left:758px;top:240px;width:49px;height:17px;padding-top:2px;">100<span style="display:inline-block;transform:scaleX(0.8);transform-origin:100% 50%;margin-left:-2.1px">%</span></div><div class="a" style="left:808px;top:240px;width:50px;height:18px;background:#e8f5fd;border-right:1px solid #c4c4c4;border-bottom:1px solid #c4c4c4"></div><div class="c m" style="left:808px;top:240px;width:49px;height:17px;padding-top:2px;">0 + 3</div><div class="a" style="left:858px;top:240px;width:50px;height:18px;background:#e8f5fd;border-right:1px solid #c4c4c4;border-bottom:1px solid #c4c4c4"></div><div class="a" style="left:61px;top:258px;width:197px;height:18px;background:#e8f5fd;border-right:1px solid #c4c4c4;border-bottom:1px solid #c4c4c4"></div><div class="c l" style="left:61px;top:258px;width:196px;height:17px;padding-top:2px;">Zabota 2.0</div><div class="a" style="left:258px;top:258px;width:50px;height:18px;background:#e8f5fd;border-right:1px solid #c4c4c4;border-bottom:1px solid #c4c4c4"></div><div class="c r" style="left:258px;top:258px;width:49px;height:17px;padding-top:2px;">8</div><div class="a" style="left:308px;top:258px;width:50px;height:18px;background:#e8f5fd;border-right:1px solid #c4c4c4;border-bottom:1px solid #c4c4c4"></div><div class="c r" style="left:308px;top:258px;width:49px;height:17px;padding-top:2px;">8</div><div class="a" style="left:358px;top:258px;width:50px;height:18px;background:#e8f5fd;border-right:1px solid #c4c4c4;border-bottom:1px solid #c4c4c4"></div><div class="c r" style="left:358px;top:258px;width:49px;height:17px;padding-top:2px;">100<span style="display:inline-block;transform:scaleX(0.8);transform-origin:100% 50%;margin-left:-2.1px">%</span></div><div class="a" style="left:408px;top:258px;width:50px;height:18px;background:#e8f5fd;border-right:1px solid #c4c4c4;border-bottom:1px solid #c4c4c4"></div><div class="c r" style="left:408px;top:258px;width:49px;height:17px;padding-top:2px;">5</div><div class="a" style="left:458px;top:258px;width:50px;height:18px;background:#e8f5fd;border-right:1px solid #c4c4c4;border-bottom:1px solid #c4c4c4"></div><div class="c r" style="left:458px;top:258px;width:49px;height:17px;padding-top:2px;">63<span style="display:inline-block;transform:scaleX(0.8);transform-origin:100% 50%;margin-left:-2.1px">%</span></div><div class="a" style="left:508px;top:258px;width:50px;height:18px;background:#e8f5fd;border-right:1px solid #c4c4c4;border-bottom:1px solid #c4c4c4"></div><div class="c r" style="left:508px;top:258px;width:49px;height:17px;padding-top:2px;">1</div><div class="a" style="left:558px;top:258px;width:50px;height:18px;background:#e8f5fd;border-right:1px solid #c4c4c4;border-bottom:1px solid #c4c4c4"></div><div class="c r" style="left:558px;top:258px;width:49px;height:17px;padding-top:2px;">13<span style="display:inline-block;transform:scaleX(0.8);transform-origin:100% 50%;margin-left:-2.1px">%</span></div><div class="a" style="left:608px;top:258px;width:50px;height:18px;background:#e8f5fd;border-right:1px solid #c4c4c4;border-bottom:1px solid #c4c4c4"></div><div class="c r" style="left:608px;top:258px;width:49px;height:17px;padding-top:2px;">1</div><div class="a" style="left:658px;top:258px;width:50px;height:18px;background:#e8f5fd;border-right:1px solid #c4c4c4;border-bottom:1px solid #c4c4c4"></div><div class="c r" style="left:658px;top:258px;width:49px;height:17px;padding-top:2px;">13<span style="display:inline-block;transform:scaleX(0.8);transform-origin:100% 50%;margin-left:-2.1px">%</span></div><div class="a" style="left:708px;top:258px;width:50px;height:18px;background:#e8f5fd;border-right:1px solid #c4c4c4;border-bottom:1px solid #c4c4c4"></div><div class="c r" style="left:708px;top:258px;width:49px;height:17px;padding-top:2px;">2</div><div class="a" style="left:758px;top:258px;width:50px;height:18px;background:#e8f5fd;border-right:1px solid #c4c4c4;border-bottom:1px solid #c4c4c4"></div><div class="c r" style="left:758px;top:258px;width:49px;height:17px;padding-top:2px;">25<span style="display:inline-block;transform:scaleX(0.8);transform-origin:100% 50%;margin-left:-2.1px">%</span></div><div class="a" style="left:808px;top:258px;width:50px;height:18px;background:#e8f5fd;border-right:1px solid #c4c4c4;border-bottom:1px solid #c4c4c4"></div><div class="c m" style="left:808px;top:258px;width:49px;height:17px;padding-top:2px;">0 + 8</div><div class="a" style="left:858px;top:258px;width:50px;height:18px;background:#e8f5fd;border-right:1px solid #c4c4c4;border-bottom:1px solid #c4c4c4"></div><div class="a" style="left:61px;top:276px;width:247px;height:18px;background:#ffffff;border-right:1px solid #c4c4c4;border-bottom:1px solid #c4c4c4"></div><div class="c l" style="left:61px;top:276px;width:246px;height:17px;padding-top:2px;">04.10.2025 | 20:15</div><div class="c r" style="left:61px;top:276px;width:246px;height:17px;padding-top:2px;letter-spacing:-0.5px;padding-right:2.5px">Фролова С. Л.</div><div class="a" style="left:308px;top:276px;width:100px;height:18px;background:#dff5c9;border-right:1px solid #c4c4c4;border-bottom:1px solid #c4c4c4"></div><div class="a" style="left:408px;top:276px;width:100px;height:18px;background:#dff5c9;border-right:1px solid #c4c4c4;border-bottom:1px solid #c4c4c4"></div><div class="a" style="left:508px;top:276px;width:100px;height:18px;background:#ffffff;border-right:1px solid #c4c4c4;border-bottom:1px solid #c4c4c4"></div><div class="a" style="left:608px;top:276px;width:100px;height:18px;background:#ffffff;border-right:1px solid #c4c4c4;border-bottom:1px solid #c4c4c4"></div><div class="a" style="left:708px;top:276px;width:100px;height:18px;background:#dff5c9;border-right:1px solid #c4c4c4;border-bottom:1px solid #c4c4c4"></div><div class="a" style="left:808px;top:276px;width:100px;height:18px;background:#ffffff;border-right:1px solid #c4c4c4;border-bottom:1px solid #c4c4c4"></div><div class="a" style="left:61px;top:294px;width:247px;height:18px;background:#ffffff;border-right:1px solid #c4c4c4;border-bottom:1px solid #c4c4c4"></div><div class="c l" style="left:61px;top:294px;width:246px;height:17px;padding-top:2px;">04.10.2025 | 17:00</div><div class="c r" style="left:61px;top:294px;width:246px;height:17px;padding-top:2px;letter-spacing:-0.5px;padding-right:2.5px">Малкова Т. А.</div><div class="a" style="left:308px;top:294px;width:100px;height:18px;background:#dff5c9;border-right:1px solid #c4c4c4;border-bottom:1px solid #c4c4c4"></div><div class="a" style="left:408px;top:294px;width:100px;height:18px;background:#dff5c9;border-right:1px solid #c4c4c4;border-bottom:1px solid #c4c4c4"></div><div class="a" style="left:508px;top:294px;width:100px;height:18px;background:#ffffff;border-right:1px solid #c4c4c4;border-bottom:1px solid #c4c4c4"></div><div class="a" style="left:608px;top:294px;width:100px;height:18px;background:#ffffff;border-right:1px solid #c4c4c4;border-bottom:1px solid #c4c4c4"></div><div class="a" style="left:708px;top:294px;width:100px;height:18px;background:#dff5c9;border-right:1px solid #c4c4c4;border-bottom:1px solid #c4c4c4"></div><div class="a" style="left:808px;top:294px;width:100px;height:18px;background:#ffffff;border-right:1px solid #c4c4c4;border-bottom:1px solid #c4c4c4"></div><div class="a" style="left:61px;top:312px;width:247px;height:18px;background:#ffffff;border-right:1px solid #c4c4c4;border-bottom:1px solid #c4c4c4"></div><div class="c l" style="left:61px;top:312px;width:246px;height:17px;padding-top:2px;">04.10.2025 | 13:30</div><div class="c r" style="left:61px;top:312px;width:246px;height:17px;padding-top:2px;letter-spacing:-0.5px;padding-right:2.5px">Жаворонкова Е.</div><div class="a" style="left:308px;top:312px;width:100px;height:18px;background:#dff5c9;border-right:1px solid #c4c4c4;border-bottom:1px solid #c4c4c4"></div><div class="a" style="left:408px;top:312px;width:100px;height:18px;background:#dff5c9;border-right:1px solid #c4c4c4;border-bottom:1px solid #c4c4c4"></div><div class="a" style="left:508px;top:312px;width:100px;height:18px;background:#ffffff;border-right:1px solid #c4c4c4;border-bottom:1px solid #c4c4c4"></div><div class="a" style="left:608px;top:312px;width:100px;height:18px;background:#dff5c9;border-right:1px solid #c4c4c4;border-bottom:1px solid #c4c4c4"></div><div class="a" style="left:708px;top:312px;width:100px;height:18px;background:#ffffff;border-right:1px solid #c4c4c4;border-bottom:1px solid #c4c4c4"></div><div class="a" style="left:808px;top:312px;width:100px;height:18px;background:#ffffff;border-right:1px solid #c4c4c4;border-bottom:1px solid #c4c4c4"></div><div class="a" style="left:61px;top:330px;width:247px;height:18px;background:#ffffff;border-right:1px solid #c4c4c4;border-bottom:1px solid #c4c4c4"></div><div class="c l" style="left:61px;top:330px;width:246px;height:17px;padding-top:2px;">03.10.2025 | 19:30</div><div class="c r" style="left:61px;top:330px;width:246px;height:17px;padding-top:2px;letter-spacing:-0.5px;padding-right:2.5px">Неликвид Н.</div><div class="a" style="left:308px;top:330px;width:100px;height:18px;background:#dff5c9;border-right:1px solid #c4c4c4;border-bottom:1px solid #c4c4c4"></div><div class="a" style="left:408px;top:330px;width:100px;height:18px;background:#dff5c9;border-right:1px solid #c4c4c4;border-bottom:1px solid #c4c4c4"></div><div class="a" style="left:508px;top:330px;width:100px;height:18px;background:#dff5c9;border-right:1px solid #c4c4c4;border-bottom:1px solid #c4c4c4"></div><div class="a" style="left:608px;top:330px;width:100px;height:18px;background:#ffffff;border-right:1px solid #c4c4c4;border-bottom:1px solid #c4c4c4"></div><div class="a" style="left:708px;top:330px;width:100px;height:18px;background:#ffffff;border-right:1px solid #c4c4c4;border-bottom:1px solid #c4c4c4"></div><div class="a" style="left:808px;top:330px;width:100px;height:18px;background:#ffffff;border-right:1px solid #c4c4c4;border-bottom:1px solid #c4c4c4"></div><div class="a" style="left:61px;top:348px;width:247px;height:18px;background:#ffffff;border-right:1px solid #c4c4c4;border-bottom:1px solid #c4c4c4"></div><div class="c l" style="left:61px;top:348px;width:246px;height:17px;padding-top:2px;">03.10.2025 | 18:00</div><div class="c r" style="left:61px;top:348px;width:246px;height:17px;padding-top:2px;letter-spacing:-0.5px;padding-right:2.5px">Лебедев А.</div><div class="a" style="left:308px;top:348px;width:100px;height:18px;background:#dff5c9;border-right:1px solid #c4c4c4;border-bottom:1px solid #c4c4c4"></div><div class="a" style="left:408px;top:348px;width:100px;height:18px;background:#dff5c9;border-right:1px solid #c4c4c4;border-bottom:1px solid #c4c4c4"></div><div class="a" style="left:508px;top:348px;width:100px;height:18px;background:#ffffff;border-right:1px solid #c4c4c4;border-bottom:1px solid #c4c4c4"></div><div class="a" style="left:608px;top:348px;width:100px;height:18px;background:#ffffff;border-right:1px solid #c4c4c4;border-bottom:1px solid #c4c4c4"></div><div class="a" style="left:708px;top:348px;width:100px;height:18px;background:#ffffff;border-right:1px solid #c4c4c4;border-bottom:1px solid #c4c4c4"></div><div class="a" style="left:808px;top:348px;width:100px;height:18px;background:#ffffff;border-right:1px solid #c4c4c4;border-bottom:1px solid #c4c4c4"></div><div class="a" style="left:61px;top:366px;width:247px;height:18px;background:#ffffff;border-right:1px solid #c4c4c4;border-bottom:1px solid #c4c4c4"></div><div class="c l" style="left:61px;top:366px;width:246px;height:17px;padding-top:2px;">03.10.2025 | 16:30</div><div class="c r" style="left:61px;top:366px;width:246px;height:17px;padding-top:2px;letter-spacing:-0.5px;padding-right:2.5px">Винокурова А. А.</div><div class="a" style="left:308px;top:366px;width:100px;height:18px;background:#fcfac9;border-right:1px solid #c4c4c4;border-bottom:1px solid #c4c4c4"></div><div class="a" style="left:408px;top:366px;width:100px;height:18px;background:#ffffff;border-right:1px solid #c4c4c4;border-bottom:1px solid #c4c4c4"></div><div class="a" style="left:508px;top:366px;width:100px;height:18px;background:#ffffff;border-right:1px solid #c4c4c4;border-bottom:1px solid #c4c4c4"></div><div class="a" style="left:608px;top:366px;width:100px;height:18px;background:#ffffff;border-right:1px solid #c4c4c4;border-bottom:1px solid #c4c4c4"></div><div class="a" style="left:708px;top:366px;width:100px;height:18px;background:#ffffff;border-right:1px solid #c4c4c4;border-bottom:1px solid #c4c4c4"></div><div class="a" style="left:808px;top:366px;width:100px;height:18px;background:#ffffff;border-right:1px solid #c4c4c4;border-bottom:1px solid #c4c4c4"></div><div class="a" style="left:61px;top:384px;width:247px;height:18px;background:#ffffff;border-right:1px solid #c4c4c4;border-bottom:1px solid #c4c4c4"></div><div class="c l" style="left:61px;top:384px;width:246px;height:17px;padding-top:2px;">03.10.2025 | 15:00</div><div class="c r" style="left:61px;top:384px;width:246px;height:17px;padding-top:2px;letter-spacing:-0.5px;padding-right:2.5px">Михайлова А.</div><div class="a" style="left:308px;top:384px;width:100px;height:18px;background:#fcfac9;border-right:1px solid #c4c4c4;border-bottom:1px solid #c4c4c4"></div><div class="a" style="left:408px;top:384px;width:100px;height:18px;background:#ffffff;border-right:1px solid #c4c4c4;border-bottom:1px solid #c4c4c4"></div><div class="a" style="left:508px;top:384px;width:100px;height:18px;background:#ffffff;border-right:1px solid #c4c4c4;border-bottom:1px solid #c4c4c4"></div><div class="a" style="left:608px;top:384px;width:100px;height:18px;background:#ffffff;border-right:1px solid #c4c4c4;border-bottom:1px solid #c4c4c4"></div><div class="a" style="left:708px;top:384px;width:100px;height:18px;background:#ffffff;border-right:1px solid #c4c4c4;border-bottom:1px solid #c4c4c4"></div><div class="a" style="left:808px;top:384px;width:100px;height:18px;background:#ffffff;border-right:1px solid #c4c4c4;border-bottom:1px solid #c4c4c4"></div><div class="a" style="left:61px;top:402px;width:247px;height:18px;background:#ffffff;border-right:1px solid #c4c4c4;border-bottom:1px solid #c4c4c4"></div><div class="c l" style="left:61px;top:402px;width:246px;height:17px;padding-top:2px;">03.10.2025 | 12:00</div><div class="c r" style="left:61px;top:402px;width:246px;height:17px;padding-top:2px;letter-spacing:-0.5px;padding-right:2.5px">Саркисова К. М.</div><div class="a" style="left:308px;top:402px;width:100px;height:18px;background:#fcfac9;border-right:1px solid #c4c4c4;border-bottom:1px solid #c4c4c4"></div><div class="a" style="left:408px;top:402px;width:100px;height:18px;background:#ffffff;border-right:1px solid #c4c4c4;border-bottom:1px solid #c4c4c4"></div><div class="a" style="left:508px;top:402px;width:100px;height:18px;background:#ffffff;border-right:1px solid #c4c4c4;border-bottom:1px solid #c4c4c4"></div><div class="a" style="left:608px;top:402px;width:100px;height:18px;background:#ffffff;border-right:1px solid #c4c4c4;border-bottom:1px solid #c4c4c4"></div><div class="a" style="left:708px;top:402px;width:100px;height:18px;background:#ffffff;border-right:1px solid #c4c4c4;border-bottom:1px solid #c4c4c4"></div><div class="a" style="left:808px;top:402px;width:100px;height:18px;background:#ffffff;border-right:1px solid #c4c4c4;border-bottom:1px solid #c4c4c4"></div><div class="a" style="left:61px;top:420px;width:197px;height:18px;background:#e8f5fd;border-right:1px solid #c4c4c4;border-bottom:1px solid #c4c4c4"></div><div class="c l" style="left:61px;top:420px;width:196px;height:17px;padding-top:2px;letter-spacing:-0.2px">&lt; Не требуется подтверждение &gt;</div><div class="a" style="left:258px;top:420px;width:50px;height:18px;background:#e8f5fd;border-right:1px solid #c4c4c4;border-bottom:1px solid #c4c4c4"></div><div class="c r" style="left:258px;top:420px;width:49px;height:17px;padding-top:2px;">1</div><div class="a" style="left:308px;top:420px;width:100px;height:18px;background:#e8f5fd;border-right:1px solid #c4c4c4;border-bottom:1px solid #c4c4c4"></div><div class="a" style="left:408px;top:420px;width:100px;height:18px;background:#e8f5fd;border-right:1px solid #c4c4c4;border-bottom:1px solid #c4c4c4"></div><div class="a" style="left:508px;top:420px;width:100px;height:18px;background:#e8f5fd;border-right:1px solid #c4c4c4;border-bottom:1px solid #c4c4c4"></div><div class="a" style="left:608px;top:420px;width:100px;height:18px;background:#e8f5fd;border-right:1px solid #c4c4c4;border-bottom:1px solid #c4c4c4"></div><div class="a" style="left:708px;top:420px;width:100px;height:18px;background:#e8f5fd;border-right:1px solid #c4c4c4;border-bottom:1px solid #c4c4c4"></div><div class="a" style="left:808px;top:420px;width:50px;height:18px;background:#e8f5fd;border-right:1px solid #c4c4c4;border-bottom:1px solid #c4c4c4"></div><div class="c m" style="left:808px;top:420px;width:49px;height:17px;padding-top:2px;">1</div><div class="a" style="left:858px;top:420px;width:50px;height:18px;background:#e8f5fd;border-right:1px solid #c4c4c4;border-bottom:1px solid #c4c4c4"></div><div class="c r" style="left:858px;top:420px;width:49px;height:17px;padding-top:2px;">100<span style="display:inline-block;transform:scaleX(0.8);transform-origin:100% 50%;margin-left:-2.1px">%</span></div><div class="a" style="left:707px;top:44px;width:205px;height:398px;border:4px solid #aed11f;border-radius:3px"></div><div class="a" style="left:991px;top:46px;width:283px;height:221px;border:1px solid #a6a6a6;background:#fff"></div><div class="a" style="left:992px;top:47px;width:281px;height:27px;background:#e9e9e9"></div><svg class="a" style="left:999px;top:58px" width="13" height="9" viewBox="0 0 13 9"><path d="M1.6 2.1 L11.6 2.1 L6.6 8.0 Z" fill="none" stroke="#595959" stroke-width="1.15" stroke-linejoin="miter"/></svg><div class="t" style="left:1022px;top:52px;font-size:13px;line-height:20px;color:#111">Период</div><svg class="a" style="left:997px;top:80px" width="15" height="15" viewBox="0 0 15 15"><circle cx="7.5" cy="7.5" r="6" fill="#fff" stroke="#5a5a5a" stroke-width="1"/></svg><div class="t" style="left:1017px;top:78px;line-height:20px;letter-spacing:-0.1px;color:#111;-webkit-text-stroke:0.25px #111">День</div><svg class="a" style="left:997px;top:108px" width="15" height="15" viewBox="0 0 15 15"><circle cx="7.5" cy="7.5" r="6" fill="#fff" stroke="#5a5a5a" stroke-width="1"/></svg><div class="t" style="left:1017px;top:106px;line-height:20px;letter-spacing:-0.1px;color:#111;-webkit-text-stroke:0.25px #111">Месяц</div><svg class="a" style="left:997px;top:136px" width="15" height="15" viewBox="0 0 15 15"><circle cx="7.5" cy="7.5" r="6" fill="#fff" stroke="#5a5a5a" stroke-width="1"/></svg><div class="t" style="left:1017px;top:134px;line-height:20px;letter-spacing:-0.1px;color:#111;-webkit-text-stroke:0.25px #111">Год</div><svg class="a" style="left:997px;top:164px" width="15" height="15" viewBox="0 0 15 15"><circle cx="7.5" cy="7.5" r="6" fill="#fff" stroke="#5a5a5a" stroke-width="1"/></svg><div class="t" style="left:1017px;top:162px;line-height:20px;letter-spacing:-0.1px;color:#111;-webkit-text-stroke:0.25px #111">Весь период</div><svg class="a" style="left:997px;top:192px" width="15" height="15" viewBox="0 0 15 15"><circle cx="7.5" cy="7.5" r="6" fill="#fff" stroke="#5a5a5a" stroke-width="1"/><circle cx="7.5" cy="7.5" r="3.6" fill="#111"/></svg><div class="t" style="left:1017px;top:190px;line-height:20px;letter-spacing:-0.1px;color:#111;-webkit-text-stroke:0.25px #111">Выборочный</div><div class="t" style="left:998px;top:218px;line-height:21px;letter-spacing:-0.2px">От</div><div class="a" style="left:1100px;top:217px;width:170px;height:20px;border:1px solid #a9a9a9;background:#fff"></div><div class="t" style="left:1102px;top:218px;line-height:19px;letter-spacing:-0.7px;color:#111">02.10.2025</div><svg class="a" style="left:1242px;top:221px" width="24" height="13" viewBox="0 0 24 13"><rect x="1.5" y="1.5" width="10" height="10" rx="1" fill="#e4e4e8" stroke="#8a8a8a" stroke-width="1"/><path d="M3.5 4.5 H9.5 M3.5 6.5 H9.5 M3.5 8.5 H9.5 M5.5 3.5 V10 M7.5 3.5 V10" stroke="#b8b8c0" stroke-width="0.8"/><path d="M14.5 4.5 L21.5 4.5 L18 8 Z" fill="#4a5878"/></svg><div class="t" style="left:998px;top:244px;line-height:21px;letter-spacing:-0.2px">До</div><div class="a" style="left:1100px;top:243px;width:170px;height:20px;border:1px solid #a9a9a9;background:#fff"></div><div class="t" style="left:1102px;top:244px;line-height:19px;letter-spacing:-0.7px;color:#111">04.10.2025</div><svg class="a" style="left:1242px;top:247px" width="24" height="13" viewBox="0 0 24 13"><rect x="1.5" y="1.5" width="10" height="10" rx="1" fill="#e4e4e8" stroke="#8a8a8a" stroke-width="1"/><path d="M3.5 4.5 H9.5 M3.5 6.5 H9.5 M3.5 8.5 H9.5 M5.5 3.5 V10 M7.5 3.5 V10" stroke="#b8b8c0" stroke-width="0.8"/><path d="M14.5 4.5 L21.5 4.5 L18 8 Z" fill="#4a5878"/></svg><div class="a" style="left:991px;top:273px;width:283px;height:83px;border:1px solid #a6a6a6;background:#fff"></div><div class="a" style="left:992px;top:274px;width:281px;height:27px;background:#e9e9e9"></div><svg class="a" style="left:999px;top:285px" width="13" height="9" viewBox="0 0 13 9"><path d="M1.6 2.1 L11.6 2.1 L6.6 8.0 Z" fill="none" stroke="#595959" stroke-width="1.15" stroke-linejoin="miter"/></svg><div class="t" style="left:1022px;top:279px;font-size:13px;line-height:20px;color:#111">Итоги по уровням</div><div class="t" style="left:998px;top:305px;line-height:21px;letter-spacing:-0.2px">Первый</div><div class="a" style="left:1100px;top:304px;width:170px;height:21px;border:1px solid #a9a9a9;border-radius:2.5px;background:#fff;overflow:hidden"><div class="a" style="left:148px;top:0;width:20px;height:19px;background:#dadada;border-left:1px solid #a9a9a9"></div><svg class="a" style="left:152px;top:6px" width="12" height="8" viewBox="0 0 12 8"><path d="M2.6 1.8 L6 5.2 L9.4 1.8" fill="none" stroke="#555" stroke-width="1.5"/></svg></div><div class="t" style="left:1107px;top:305px;line-height:21px;letter-spacing:-0.2px;color:#111">Подтвердил</div><div class="t" style="left:998px;top:332px;line-height:21px;letter-spacing:-0.2px">Второй</div><div class="a" style="left:1100px;top:331px;width:170px;height:21px;border:1px solid #a9a9a9;border-radius:2.5px;background:#fff;overflow:hidden"><div class="a" style="left:148px;top:0;width:20px;height:19px;background:#dadada;border-left:1px solid #a9a9a9"></div><svg class="a" style="left:152px;top:6px" width="12" height="8" viewBox="0 0 12 8"><path d="M2.6 1.8 L6 5.2 L9.4 1.8" fill="none" stroke="#555" stroke-width="1.5"/></svg></div><div class="t" style="left:1107px;top:332px;line-height:21px;letter-spacing:-0.2px;color:#111">Нет</div><div class="a" style="left:991px;top:362px;width:283px;height:56px;border:1px solid #a6a6a6;background:#fff"></div><div class="a" style="left:992px;top:363px;width:281px;height:27px;background:#e9e9e9"></div><svg class="a" style="left:999px;top:374px" width="13" height="9" viewBox="0 0 13 9"><path d="M1.6 2.1 L11.6 2.1 L6.6 8.0 Z" fill="none" stroke="#595959" stroke-width="1.15" stroke-linejoin="miter"/></svg><div class="t" style="left:1022px;top:368px;font-size:13px;line-height:20px;color:#111">Вид отчета</div><div class="t" style="left:998px;top:394px;line-height:21px;letter-spacing:-0.2px">Показать</div><div class="a" style="left:1100px;top:393px;width:170px;height:21px;border:1px solid #a9a9a9;border-radius:2.5px;background:#fff;overflow:hidden"><div class="a" style="left:148px;top:0;width:20px;height:19px;background:#dadada;border-left:1px solid #a9a9a9"></div><svg class="a" style="left:152px;top:6px" width="12" height="8" viewBox="0 0 12 8"><path d="M2.6 1.8 L6 5.2 L9.4 1.8" fill="none" stroke="#555" stroke-width="1.5"/></svg><svg class="a" style="left:136px;top:5px" width="10" height="10" viewBox="0 0 10 10"><path d="M1.9 1.9 L7.9 7.9 M7.9 1.9 L1.9 7.9" stroke="#505050" stroke-width="1.7"/></svg></div><div class="t" style="left:1107px;top:394px;line-height:21px;letter-spacing:-0.2px;color:#111">Получен ответ</div><div class="a" style="left:991px;top:424px;width:283px;height:164px;border:1px solid #a6a6a6;background:#fff"></div><div class="a" style="left:992px;top:425px;width:281px;height:27px;background:#e9e9e9"></div><svg class="a" style="left:999px;top:436px" width="13" height="9" viewBox="0 0 13 9"><path d="M1.6 2.1 L11.6 2.1 L6.6 8.0 Z" fill="none" stroke="#595959" stroke-width="1.15" stroke-linejoin="miter"/></svg><div class="t" style="left:1022px;top:430px;font-size:13px;line-height:20px;color:#111">Прочие</div><div class="t" style="left:998px;top:456px;line-height:21px;letter-spacing:-0.2px">Куратор</div><div class="a" style="left:1100px;top:455px;width:170px;height:21px;border:1px solid #a9a9a9;border-radius:2.5px;background:#fff;overflow:hidden"><div class="a" style="left:148px;top:0;width:20px;height:19px;background:#dadada;border-left:1px solid #a9a9a9"></div><svg class="a" style="left:152px;top:6px" width="12" height="8" viewBox="0 0 12 8"><path d="M2.6 1.8 L6 5.2 L9.4 1.8" fill="none" stroke="#555" stroke-width="1.5"/></svg></div><div class="t" style="left:1107px;top:456px;line-height:21px;letter-spacing:-0.2px;font-style:italic;color:#111">&lt; Не выбрано &gt;</div><div class="t" style="left:998px;top:483px;line-height:21px;letter-spacing:-0.2px">Врач</div><div class="a" style="left:1100px;top:482px;width:170px;height:21px;border:1px solid #a9a9a9;border-radius:2.5px;background:#fff;overflow:hidden"><div class="a" style="left:148px;top:0;width:20px;height:19px;background:#dadada;border-left:1px solid #a9a9a9"></div><svg class="a" style="left:152px;top:6px" width="12" height="8" viewBox="0 0 12 8"><path d="M2.6 1.8 L6 5.2 L9.4 1.8" fill="none" stroke="#555" stroke-width="1.5"/></svg></div><div class="t" style="left:1107px;top:483px;line-height:21px;letter-spacing:-0.2px;font-style:italic;color:#111">&lt; Не выбрано &gt;</div><div class="t" style="left:998px;top:510px;line-height:21px;letter-spacing:-0.2px">Подтвердил</div><div class="a" style="left:1100px;top:509px;width:170px;height:21px;border:1px solid #a9a9a9;border-radius:2.5px;background:#fff;overflow:hidden"><div class="a" style="left:148px;top:0;width:20px;height:19px;background:#dadada;border-left:1px solid #a9a9a9"></div><svg class="a" style="left:152px;top:6px" width="12" height="8" viewBox="0 0 12 8"><path d="M2.6 1.8 L6 5.2 L9.4 1.8" fill="none" stroke="#555" stroke-width="1.5"/></svg></div><div class="t" style="left:1107px;top:510px;line-height:21px;letter-spacing:-0.2px;font-style:italic;color:#111">&lt; Не выбрано &gt;</div><div class="t" style="left:998px;top:537px;line-height:21px;letter-spacing:-0.2px">Стадия</div><div class="a" style="left:1100px;top:536px;width:170px;height:21px;border:1px solid #a9a9a9;border-radius:2.5px;background:#fff;overflow:hidden"><div class="a" style="left:148px;top:0;width:20px;height:19px;background:#dadada;border-left:1px solid #a9a9a9"></div><svg class="a" style="left:152px;top:6px" width="12" height="8" viewBox="0 0 12 8"><path d="M2.6 1.8 L6 5.2 L9.4 1.8" fill="none" stroke="#555" stroke-width="1.5"/></svg></div><div class="t" style="left:1107px;top:537px;line-height:21px;letter-spacing:-0.2px;font-style:italic;color:#111">&lt; Не выбрано &gt;</div><div class="t" style="left:998px;top:564px;line-height:21px;letter-spacing:-0.2px">Статус пациента</div><div class="a" style="left:1100px;top:563px;width:170px;height:21px;border:1px solid #a9a9a9;border-radius:2.5px;background:#fff;overflow:hidden"><div class="a" style="left:148px;top:0;width:20px;height:19px;background:#dadada;border-left:1px solid #a9a9a9"></div><svg class="a" style="left:152px;top:6px" width="12" height="8" viewBox="0 0 12 8"><path d="M2.6 1.8 L6 5.2 L9.4 1.8" fill="none" stroke="#555" stroke-width="1.5"/></svg></div><div class="t" style="left:1107px;top:564px;line-height:21px;letter-spacing:-0.2px;font-style:italic;color:#111">&lt; Не выбрано &gt;</div><div class="a" style="left:991px;top:594px;width:283px;height:56px;border:1px solid #a6a6a6;background:#fff"></div><div class="a" style="left:992px;top:595px;width:281px;height:27px;background:#e9e9e9"></div><svg class="a" style="left:999px;top:606px" width="13" height="9" viewBox="0 0 13 9"><path d="M1.6 2.1 L11.6 2.1 L6.6 8.0 Z" fill="none" stroke="#595959" stroke-width="1.15" stroke-linejoin="miter"/></svg><div class="t" style="left:1022px;top:600px;font-size:13px;line-height:20px;color:#111">Маркетинг</div><div class="t" style="left:998px;top:626px;line-height:21px;letter-spacing:-0.2px">Показ. рекоменд.</div><div class="a" style="left:1100px;top:625px;width:170px;height:21px;border:1px solid #a9a9a9;border-radius:2.5px;background:#fff;overflow:hidden"><div class="a" style="left:148px;top:0;width:20px;height:19px;background:#dadada;border-left:1px solid #a9a9a9"></div><svg class="a" style="left:152px;top:6px" width="12" height="8" viewBox="0 0 12 8"><path d="M2.6 1.8 L6 5.2 L9.4 1.8" fill="none" stroke="#555" stroke-width="1.5"/></svg></div><div class="t" style="left:1107px;top:626px;line-height:21px;letter-spacing:-0.2px;font-style:italic;color:#111">&lt; Не выбрано &gt;</div><div class="a" style="left:1075px;top:680px;width:33px;height:33px;border:1px solid #a3a3a3;border-radius:3px;background:#dcdcdc"></div><div class="a" style="left:1116px;top:680px;width:33px;height:33px;border:1px solid #a3a3a3;border-radius:3px;background:#dcdcdc"></div><div class="a" style="left:1157px;top:680px;width:33px;height:33px;border:1px solid #a3a3a3;border-radius:3px;background:#dcdcdc"></div><svg class="a" style="left:1075px;top:680px" width="34" height="34" viewBox="0 0 34 34"><path d="M9 10 H24.5 L18.5 17 V24 Q18.5 25.5 17 25.5 L16.3 25.5 Q15.8 25.5 15.8 24.5 V17 Z" fill="#595959"/><path d="M20 22.5 H23.5 V20.5 L27 24 L23.5 27.5 V25.5 H20 Z" fill="#595959"/></svg><svg class="a" style="left:1116px;top:680px" width="34" height="34" viewBox="0 0 34 34"><path d="M9 10 H24.5 L18.5 17 V24 Q18.5 25.5 17 25.5 L16.3 25.5 Q15.8 25.5 15.8 24.5 V17 Z" fill="#595959"/><path d="M21 21.5 L26 26.5 M26 21.5 L21 26.5" stroke="#595959" stroke-width="1.8"/></svg><svg class="a" style="left:1157px;top:680px" width="34" height="34" viewBox="0 0 34 34"><path d="M10 9 H15.5 L17.5 13.5 L19.5 9 H23.5 L20 17 L24 24 H18.5 L16.8 20 L14.8 24 H9.5 L13.8 17 Z" fill="#595959"/></svg></body></html>
